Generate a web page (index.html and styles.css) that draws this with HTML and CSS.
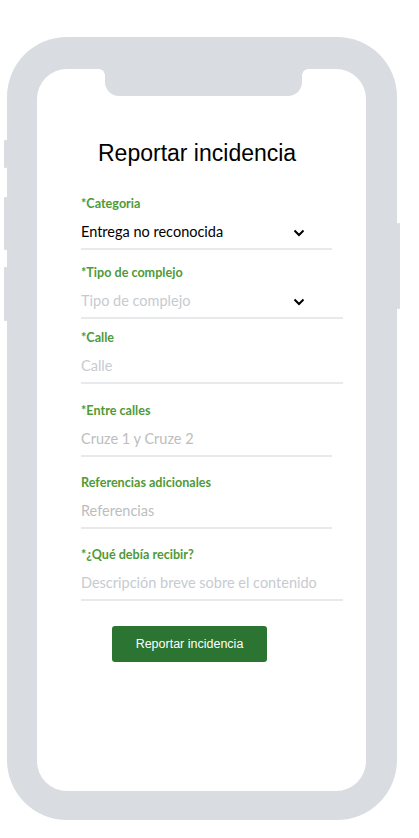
FILE: index.html
```html
<!DOCTYPE html>
<html lang="es">
<head>
<meta charset="utf-8">
<title>Reportar incidencia</title>
<link rel="stylesheet" href="styles.css">
</head>
<body>
<div class="phone">
  <span class="side-btn side-left b1"></span>
  <span class="side-btn side-left b2"></span>
  <span class="side-btn side-left b3"></span>
  <span class="side-btn side-right b4"></span>
  <div class="screen">
    <div class="notch"></div>
    <h1 class="title">Reportar incidencia</h1>
    <form class="form">
      <div class="field short gap-a">
        <label class="label">*Categoria</label>
        <div class="input select">
          <span class="value">Entrega no reconocida</span>
          <svg class="chev" width="12" height="8" viewBox="0 0 12 8"><path d="M1.5 1.5 L6 6 L10.5 1.5" fill="none" stroke="#000" stroke-width="2"/></svg>
        </div>
      </div>
      <div class="field long gap-b">
        <label class="label">*Tipo de complejo</label>
        <div class="input select">
          <span class="placeholder">Tipo de complejo</span>
          <svg class="chev" width="12" height="8" viewBox="0 0 12 8"><path d="M1.5 1.5 L6 6 L10.5 1.5" fill="none" stroke="#000" stroke-width="2"/></svg>
        </div>
      </div>
      <div class="field long gap-c">
        <label class="label">*Calle</label>
        <div class="input"><span class="placeholder">Calle</span></div>
      </div>
      <div class="field short gap-d">
        <label class="label">*Entre calles</label>
        <div class="input"><span class="placeholder gray">Cruze 1 y Cruze 2</span></div>
      </div>
      <div class="field short gap-d">
        <label class="label">Referencias adicionales</label>
        <div class="input"><span class="placeholder gray">Referencias</span></div>
      </div>
      <div class="field long gap-e">
        <label class="label">*¿Qué debía recibir?</label>
        <div class="input"><span class="placeholder">Descripción breve sobre el contenido</span></div>
      </div>
      <button type="button" class="btn">Reportar incidencia</button>
    </form>
  </div>
</div>
</body>
</html>
```

FILE: styles.css
```css
html, body {
  margin: 0;
  padding: 0;
  background: #ffffff;
}
body {
  padding: 37px 0 0 7px;
}
.phone {
  position: relative;
  width: 390px;
  height: 783px;
  box-sizing: border-box;
  padding: 32px 31px 29px 30px;
  background: #d9dde1;
  border-radius: 60px;
}
.side-btn {
  position: absolute;
  width: 3px;
  background: #d9dde1;
  border-radius: 1px;
}
.side-left { left: -3px; }
.side-right { right: -3px; }
.b1 { top: 103px; height: 28px; }
.b2 { top: 160px; height: 53px; }
.b3 { top: 230px; height: 54px; }
.b4 { top: 186px; height: 86px; }
.screen {
  position: relative;
  height: 100%;
  background: #ffffff;
  border-radius: 30px;
  padding: 71px 0 0 44px;
  box-sizing: border-box;
}
.notch {
  position: absolute;
  top: 0;
  left: 68px;
  width: 197px;
  height: 27px;
  background: #d9dde1;
  border-radius: 0 0 14px 14px;
}
.notch::before,
.notch::after {
  content: "";
  position: absolute;
  top: 0;
  width: 6px;
  height: 6px;
}
.notch::before {
  left: -6px;
  background: radial-gradient(circle at 0 100%, transparent 5.5px, #d9dde1 6px);
}
.notch::after {
  right: -6px;
  background: radial-gradient(circle at 100% 100%, transparent 5.5px, #d9dde1 6px);
}
.title {
  margin: 0 0 30px 17px;
  font-family: "Liberation Sans", Arial, sans-serif;
  font-weight: 400;
  font-size: 23px;
  line-height: 26px;
  color: #000;
}
.form {
  display: flex;
  flex-direction: column;
  align-items: flex-start;
}
.field {
  border-bottom: 2px solid #e8e9ea;
}
.field.short { width: 251px; }
.field.long { width: 262px; }
.gap-a { margin-bottom: 15px; }
.gap-b { margin-bottom: 11px; }
.gap-c { margin-bottom: 19px; }
.gap-d { margin-bottom: 18px; }
.gap-e { margin-bottom: 25px; }
.label {
  display: block;
  font-family: Lato, "Open Sans", sans-serif;
  font-weight: 700;
  font-size: 12.6px;
  line-height: 16px;
  color: #4f9a37;
}
.input {
  display: flex;
  align-items: center;
  height: 20px;
  padding: 10px 0 6px;
  font-family: Lato, "Open Sans", sans-serif;
  font-size: 14.5px;
  line-height: 20px;
}
.select {
  width: 224px;
  justify-content: space-between;
}
.value { color: #000; }
.placeholder { color: #c7cbd0; }
.placeholder.gray { color: #bdbdbd; }
.chev { display: block; margin-top: 1px; }
.btn {
  margin-left: 31px;
  width: 155px;
  height: 36px;
  border: 0;
  border-radius: 3px;
  background: #2b7431;
  color: #fff;
  font-family: "Liberation Sans", Arial, sans-serif;
  font-size: 12.5px;
  padding: 0;
}
```
